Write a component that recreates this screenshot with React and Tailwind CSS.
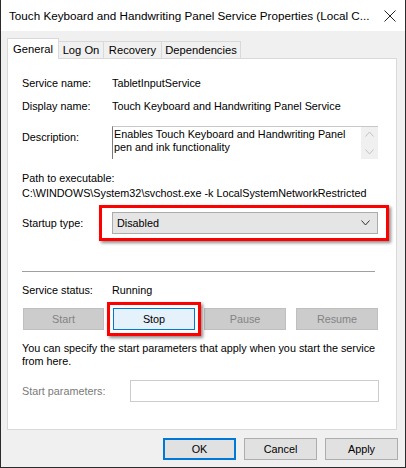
import React from "react";

const font = { fontFamily: '"Liberation Sans", Arial, sans-serif' };

const Chevron = ({ up }) => (
  <svg width="9" height="6" viewBox="0 0 9 6" className="block">
    <polyline
      points={up ? "0.5,5.5 4.5,1 8.5,5.5" : "0.5,0.5 4.5,5 8.5,0.5"}
      fill="none"
      stroke="currentColor"
      strokeWidth="1"
    />
  </svg>
);

const Btn = ({ children, w, disabled, className = "" }) => (
  <div
    className={`h-[22px] ${w} flex items-center justify-center border ${
      disabled ? "bg-[#cccccc] border-[#bfbfbf] text-[#838383]" : "bg-[#e1e1e1] border-[#adadad] text-black"
    } ${className}`}
  >
    {children}
  </div>
);

const Row = ({ label, children, className = "" }) => (
  <div className={`flex h-[15px] leading-[15px] ${className}`}>
    <div className="w-[90px] shrink-0">{label}</div>
    <div className="whitespace-nowrap">{children}</div>
  </div>
);

export default function App() {
  return (
    <div
      style={font}
      className="w-[406px] h-[468px] bg-[#f0f0f0] border-x border-b border-[#2b2b2b] flex flex-col text-[10.8px] text-black overflow-hidden"
    >
      {/* title bar */}
      <div className="h-[31px] bg-white flex items-center shrink-0">
        <div className="pl-[8px] text-[11.7px] whitespace-nowrap">
          Touch Keyboard and Handwriting Panel Service Properties (Local C...
        </div>
        <div className="ml-auto mr-[9px]">
          <svg width="12" height="12" viewBox="0 0 12 12">
            <path d="M0.5 0.5 L11.5 11.5 M11.5 0.5 L0.5 11.5" stroke="#222" strokeWidth="1" />
          </svg>
        </div>
      </div>

      {/* tabs */}
      <div className="flex items-end ml-[6px] mt-[7px] h-[20px] relative z-10 text-[11.2px]">
        <div className="h-[21px] w-[52px] bg-white border border-b-0 border-[#d9d9d9] flex items-center justify-center translate-y-[1px]">
          General
        </div>
        <div className="h-[17px] w-[45px] border border-l-0 border-b-0 border-[#d9d9d9] flex items-center justify-center">
          Log On
        </div>
        <div className="h-[17px] w-[58px] border border-l-0 border-b-0 border-[#d9d9d9] flex items-center justify-center">
          Recovery
        </div>
        <div className="h-[17px] w-[79px] border border-l-0 border-b-0 border-[#d9d9d9] flex items-center justify-center">
          Dependencies
        </div>
      </div>

      {/* panel */}
      <div className="ml-[6px] mr-[8px] bg-white border border-[#d9d9d9] pl-[14px] pb-[27px]">
        <Row label="Service name:" className="mt-[17px]">
          TabletInputService
        </Row>
        <Row label="Display name:" className="mt-[8px]">
          Touch Keyboard and Handwriting Panel Service
        </Row>

        <div className="flex mt-[12px]">
          <div className="w-[90px] shrink-0 mt-[4px] h-[15px] leading-[15px]">Description:</div>
          <div className="w-[266px] h-[33px] flex border-t border-[#c8c8c8] border-l border-l-[#7a7a7a]">
            <div className="flex-1 pl-[1px] pt-[1px] leading-[13px]">
              Enables Touch Keyboard and Handwriting Panel
              <br />
              pen and ink functionality
            </div>
            <div className="w-[17px] bg-[#f0f0f0] flex flex-col items-center justify-between py-[4px] text-[#c2c2c2]">
              <Chevron up />
              <Chevron />
            </div>
          </div>
        </div>

        <div className="mt-[12px] h-[15px] leading-[15px]">Path to executable:</div>
        <div className="h-[15px] leading-[15px] whitespace-nowrap">
          C:\WINDOWS\System32\svchost.exe -k LocalSystemNetworkRestricted
        </div>

        <div className="flex items-center mt-[11px]">
          <div className="w-[90px] shrink-0">Startup type:</div>
          <div className="relative">
            <div className="absolute -left-[13px] -right-[11px] -top-[7px] -bottom-[7px] border-[3px] border-[#ff0000] shadow-[2px_2px_3px_rgba(0,0,0,0.45)]" />
            <div className="w-[266px] h-[22px] bg-[#e5e5e5] border border-[#acacac] flex items-center pl-[4px] pr-[7px] relative">
              Disabled
              <span className="ml-auto text-[#333]">
                <Chevron />
              </span>
            </div>
          </div>
        </div>

        <div className="mt-[37px] h-px w-[353px] bg-[#a0a0a0]" />

        <Row label="Service status:" className="mt-[11px]">
          Running
        </Row>

        <div className="flex mt-[10px] ml-[1px]">
          <Btn w="w-[81px]" disabled>
            Start
          </Btn>
          <div className="relative ml-[9px]">
            <div className="absolute -inset-[6px] border-[3px] border-[#ff0000] shadow-[2px_2px_3px_rgba(0,0,0,0.45)]" />
            <div className="relative h-[22px] w-[82px] flex items-center justify-center bg-[#e5f1fb] border border-[#0078d7]">
              Stop
            </div>
          </div>
          <Btn w="w-[82px]" disabled className="ml-[9px]">
            Pause
          </Btn>
          <Btn w="w-[82px]" disabled className="ml-[10px]">
            Resume
          </Btn>
        </div>

        <div className="mt-[12px] leading-[13px] whitespace-nowrap">
          You can specify the start parameters that apply when you start the service
          <br />
          from here.
        </div>

        <div className="flex items-center mt-[12px]">
          <div className="w-[108px] shrink-0 text-[#7a7a7a]">Start parameters:</div>
          <div className="w-[249px] h-[22px] border border-[#cccccc] bg-white" />
        </div>
      </div>

      {/* footer */}
      <div className="flex justify-end mt-[8px] mr-[7px] gap-[8px]">
        <div className="h-[22px] w-[73px] flex items-center justify-center bg-[#e1e1e1] border-2 border-[#0078d7]">
          OK
        </div>
        <Btn w="w-[73px]">Cancel</Btn>
        <Btn w="w-[73px]">Apply</Btn>
      </div>
    </div>
  );
}
